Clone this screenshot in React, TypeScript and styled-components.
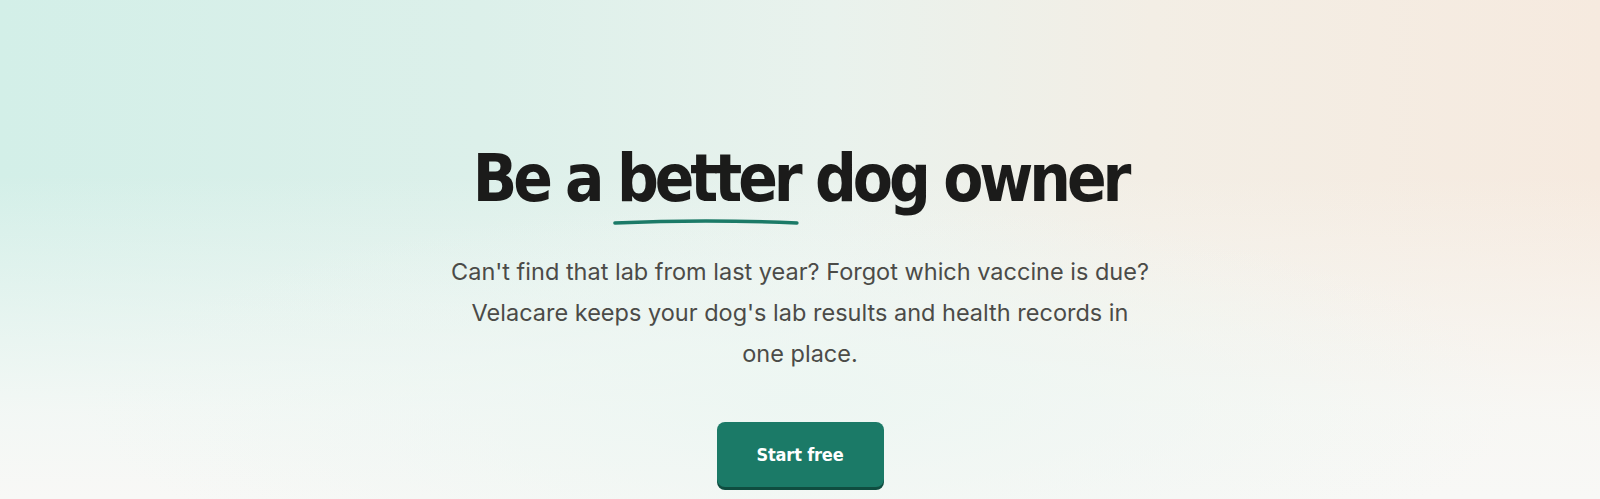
import React from "react";
import styled, { createGlobalStyle } from "styled-components";

const GlobalStyle = createGlobalStyle`
  html, body {
    margin: 0;
    padding: 0;
  }
  body {
    min-height: 499px;
    background:
      radial-gradient(ellipse 45% 40% at 50% 80%, rgba(236, 246, 242, 0.9), rgba(236, 246, 242, 0) 100%),
      linear-gradient(180deg, rgba(248, 249, 247, 0) 35%, rgba(248, 249, 247, 0.85) 82%, #f8f8f6 100%),
      linear-gradient(90deg, #d3efe8 0%, #dcf0ea 30%, #e9f2ed 52%, #f3eee5 72%, #f6eadf 100%);
    font-family: "Inter", "Liberation Sans", sans-serif;
  }
`;

const Hero = styled.section`
  display: flex;
  flex-direction: column;
  align-items: center;
  padding-top: 137px;
  min-height: 499px;
  box-sizing: border-box;
`;

const Title = styled.h1`
  margin: 0;
  font-family: "DejaVu Sans Condensed", "DejaVu Sans", sans-serif;
  font-weight: 700;
  font-size: 65px;
  line-height: 84px;
  letter-spacing: -0.062em;
  color: #1b1b1a;
  text-align: center;
`;

const Marked = styled.span`
  position: relative;
  display: inline-block;
`;

const Stroke = styled.svg`
  position: absolute;
  left: -4px;
  bottom: -6px;
  width: calc(100% + 4px);
  height: 10px;
  overflow: visible;
`;

const Lead = styled.p`
  margin: 30px 0 0;
  max-width: 730px;
  font-family: "Inter", "Liberation Sans", sans-serif;
  font-size: 23.5px;
  line-height: 41px;
  color: #4b4b48;
  text-align: center;
`;

// keeps the last two words together on their own line
const Tail = styled.span`
  white-space: nowrap;
`;

const StartButton = styled.button`
  margin-top: 48px;
  width: 167px;
  height: 65px;
  border: none;
  border-radius: 8px;
  background: #1b7a67;
  box-shadow: 0 3px 0 #0f4d40;
  color: #ffffff;
  font-family: "DejaVu Sans Condensed", "DejaVu Sans", sans-serif;
  font-weight: 700;
  font-size: 18px;
  letter-spacing: -0.01em;
  cursor: pointer;
`;

export default function App() {
  return (
    <>
      <GlobalStyle />
      <Hero>
        <Title>
          Be a{" "}
          <Marked>
            better
            <Stroke viewBox="0 0 100 10" preserveAspectRatio="none">
              <path
                d="M1 6 Q50 2 99 6"
                fill="none"
                stroke="#1b7a67"
                strokeWidth="3.4"
                strokeLinecap="round"
                vectorEffect="non-scaling-stroke"
              />
            </Stroke>
          </Marked>{" "}
          dog owner
        </Title>
        <Lead>
          Can't find that lab from last year? Forgot which vaccine is due?
          Velacare keeps your dog's lab results and health records in{" "}
          <Tail>one place.</Tail>
        </Lead>
        <StartButton>Start free</StartButton>
      </Hero>
    </>
  );
}
